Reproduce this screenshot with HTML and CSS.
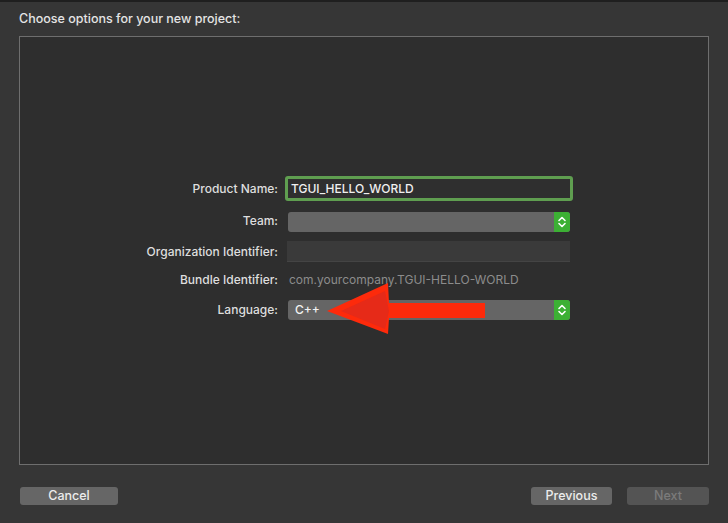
FILE: index.html
```html
<!DOCTYPE html>
<html>
<head>
<meta charset="utf-8">
<link rel="stylesheet" href="styles.css">
</head>
<body>
<div class="sheet">
  <div class="title">Choose options for your new project:</div>
  <div class="panel">
    <div class="form">
      <div class="label">Product Name:</div>
      <div class="field focus">TGUI_HELLO_WORLD</div>

      <div class="label">Team:</div>
      <div class="popup team"><span class="ptext"></span><span class="stepper"><svg width="16" height="20" viewBox="0 0 16 20"><path d="M5 8.5 L8 5.5 L11 8.5 M5 11.5 L8 14.5 L11 11.5" fill="none" stroke="#fff" stroke-width="1.6" stroke-linecap="round" stroke-linejoin="round"/></svg></span></div>

      <div class="label">Organization Identifier:</div>
      <div class="field empty"></div>

      <div class="label">Bundle Identifier:</div>
      <div class="plain">com.yourcompany.TGUI-HELLO-WORLD</div>

      <div class="label lang">Language:</div>
      <div class="popup lang"><span class="ptext">C++</span><span class="stepper"><svg width="16" height="20" viewBox="0 0 16 20"><path d="M5 8.5 L8 5.5 L11 8.5 M5 11.5 L8 14.5 L11 11.5" fill="none" stroke="#fff" stroke-width="1.6" stroke-linecap="round" stroke-linejoin="round"/></svg></span></div>

      <svg class="arrow" width="170" height="60" viewBox="0 0 170 60">
        <polygon points="0,28 61,0 62,20 158,20 158,35 62,35 61,51" fill="#fd2a0b"/>
        <polygon points="14,28 58,8 62,28 58,46" fill="#e62a18"/>
      </svg>
    </div>
  </div>
  <div class="footer">
    <button class="btn cancel">Cancel</button>
    <div class="right">
      <button class="btn prev">Previous</button>
      <button class="btn next">Next</button>
    </div>
  </div>
</div>
</body>
</html>
```

FILE: styles.css
```css
html, body {
  margin: 0;
  padding: 0;
  background: #363636;
}
body {
  width: 728px;
  height: 523px;
  overflow: hidden;
  font-family: Inter, "Liberation Sans", Arial, sans-serif;
  color: #dcdcdc;
  border-top: 2px solid #1f1f1f;
  box-sizing: border-box;
}
.sheet {
  padding: 0 19px 0 19px;
}
.title {
  font-size: 12.5px;
  font-weight: 500;
  line-height: 16px;
  padding-top: 9px;
  height: 25px;
  color: #e4e4e4;
}
.panel {
  height: 427px;
  border: 1px solid #6e6e6e;
  background: #2e2e2e;
  box-sizing: content-box;
}
.form {
  position: relative;
  display: grid;
  grid-template-columns: 258px 283px;
  grid-template-rows: 25px 20px 21px 16px 20px;
  column-gap: 9px;
  row-gap: 10px;
  margin-top: 139px;
}
.label {
  text-align: right;
  font-size: 12px;
  font-weight: 500;
  color: #dedede;
  align-self: center;
  line-height: 16px;
}
.label.lang {
  margin-top: 4px;
}
.field {
  box-sizing: border-box;
  font-size: 12px;
  align-self: center;
}
.field.focus {
  margin-left: -2px;
  width: 288px;
  height: 25px;
  border: 3px solid #5f9e50;
  border-radius: 3px;
  background: #2f2f2f;
  color: #f0f0f0;
  font-weight: 500;
  padding-left: 3px;
  line-height: 19px;
}
.field.empty {
  height: 21px;
  background: #3a3a3a;
  border-bottom: 1px solid #444;
}
.plain {
  font-size: 12px;
  color: #8c8c8c;
  align-self: center;
  padding-left: 2px;
  line-height: 16px;
}
.popup {
  display: flex;
  height: 20px;
  margin-left: 1px;
  background: #656565;
  border-radius: 3px;
  overflow: hidden;
}
.popup.team {
  margin-top: 1px;
}
.popup.lang {
  margin-top: 2px;
}
.ptext {
  flex: 1;
  font-size: 12px;
  font-weight: 500;
  color: #f2f2f2;
  line-height: 20px;
  padding-left: 7px;
}
.stepper {
  width: 16px;
  height: 20px;
  background: #3cb034;
  display: flex;
}
.arrow {
  position: absolute;
  left: 307px;
  top: 107px;
}
.footer {
  display: flex;
  justify-content: space-between;
  margin-top: 22px;
  padding-left: 1px;
}
.right {
  display: flex;
  gap: 15px;
}
.btn {
  font-family: inherit;
  font-weight: 500;
  height: 18px;
  border: none;
  border-radius: 3px;
  background: #666666;
  color: #ececec;
  font-size: 12.5px;
  padding: 0;
  line-height: 18px;
}
.cancel { width: 98px; }
.prev { width: 81px; }
.next { width: 82px; color: #7b7b7b; background: #545454; }
```
